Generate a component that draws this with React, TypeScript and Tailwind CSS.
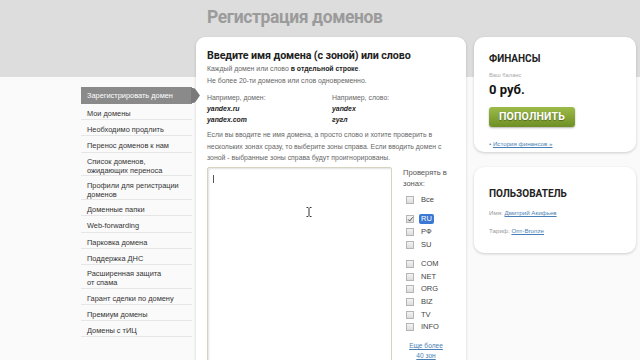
import React from "react";

const navItems: { label: React.ReactNode; active?: boolean; tall?: boolean }[] = [
  { label: "Зарегистрировать домен", active: true },
  { label: "Мои домены" },
  { label: "Необходимо продлить" },
  { label: "Перенос доменов к нам" },
  { label: <>Список доменов,<br />ожидающих переноса</>, tall: true },
  { label: <>Профили для регистрации<br />доменов</>, tall: true },
  { label: "Доменные папки" },
  { label: "Web-forwarding" },
  { label: "Парковка домена" },
  { label: "Поддержка ДНС" },
  { label: <>Расширенная защита<br />от спама</>, tall: true },
  { label: "Гарант сделки по домену" },
  { label: "Премиум домены" },
  { label: "Домены с тИЦ" },
];

function Box({ checked }: { checked?: boolean }) {
  return (
    <span className="relative inline-block w-[8px] h-[8px] border border-[#b5b5b5] bg-[linear-gradient(#f4f4f4,#dcdcdc)] shrink-0">
      {checked && (
        <svg viewBox="0 0 8 8" className="absolute left-0 top-0 w-[7px] h-[7px]">
          <path d="M1.5 4 L3 5.8 L6.5 1.5" stroke="#444" strokeWidth="1" fill="none" />
        </svg>
      )}
    </span>
  );
}

function Zone({ label, checked, selected }: { label: string; checked?: boolean; selected?: boolean }) {
  return (
    <div className="flex items-center h-[12.6px] pl-[3px]">
      <Box checked={checked} />
      <span
        className={
          "ml-[5px] text-[7.5px] leading-[10px] px-[2px] rounded-[2px] " +
          (selected ? "bg-[#3a78d4] text-white" : "text-[#444]")
        }
      >
        {label}
      </span>
    </div>
  );
}

export default function App() {
  return (
    <div
      className="w-[640px] h-[360px] overflow-hidden bg-[linear-gradient(to_bottom,#dddddd_77px,#fafafa_77px)]"
      style={{ fontFamily: '"Liberation Sans", Arial, sans-serif' }}
    >
      <div className="flex pl-[81px]">
        {/* Left navigation */}
        <nav className="w-[111px] mt-[87px] shrink-0">
          {navItems.map((it, i) => (
            <div
              key={i}
              className={
                "relative flex items-center pl-[6px] text-[7.4px] leading-[9px] " +
                (it.active
                  ? "h-[17px] bg-[#8a8a8a] text-white"
                  : (it.tall ? "h-[23.8px] pt-[4px] " : "h-[16.2px] pt-[4px] ") + "text-[#333] border-b border-[#e6e6e6]")
              }
            >
              <span>{it.label}</span>
              {it.active && (
                <span className="absolute right-[-8px] top-[1px] w-[9px] h-[15px] bg-[#7a7a7a] rounded-r-[8px] [clip-path:polygon(0_0,40%_0,100%_50%,40%_100%,0_100%)]" />
              )}
            </div>
          ))}
        </nav>

        {/* Main area */}
        <div className="ml-[4px] flex flex-col">
          <h1
            className="h-[37px] pl-[11px] pt-[6px] text-[17.5px] leading-[22px] font-bold text-[#9b9b9b] tracking-[-0.4px]"
            style={{ fontFamily: 'Roboto, "Liberation Sans", sans-serif' }}
          >
            Регистрация доменов
          </h1>
          <div className="flex gap-[8px]">
            {/* Center card */}
            <div className="w-[270px] h-[340px] bg-white rounded-[9px] shadow-[0_1px_3px_rgba(0,0,0,0.18)] pl-[11px] pr-[10px] pt-[13px]">
              <h2
                className="text-[10.7px] leading-[12px] font-bold text-[#222] tracking-[-0.1px]"
                style={{ fontFamily: 'Roboto, "Liberation Sans", sans-serif' }}
              >
                Введите имя домена (с зоной) или слово
              </h2>
              <div className="mt-[1px] text-[6.9px] leading-[11.5px] text-[#666]">
                <p>
                  Каждый домен или слово <b className="text-[#222]">в отдельной строке</b>.
                </p>
                <p>Не более 20-ти доменов или слов одновременно.</p>
              </div>
              <div className="mt-[6px] flex text-[6.9px] leading-[11px] text-[#666]">
                <div className="w-[125px]">
                  <p>Например, домен:</p>
                  <p className="font-bold italic text-[#222]">yandex.ru</p>
                  <p className="font-bold italic text-[#222]">yandex.com</p>
                </div>
                <div>
                  <p>Например, слово:</p>
                  <p className="font-bold italic text-[#222]">yandex</p>
                  <p className="font-bold italic text-[#222]">гугл</p>
                </div>
              </div>
              <p className="mt-[4px] text-[6.9px] leading-[11.5px] text-[#666] w-[240px]">
                Если вы вводите не имя домена, а просто слово и хотите проверить в нескольких зонах сразу, то выберите зоны справа. Если вводить домен с зоной - выбранные зоны справа будут проигнорированы.
              </p>
              <div className="mt-[3px] flex">
                <div className="relative w-[185px] h-[200px] border border-[#d6d4c0] rounded-[2px] shadow-[inset_1px_1px_2px_rgba(0,0,0,0.12)] bg-white">
                  <span className="absolute left-[5px] top-[7px] w-px h-[8px] bg-[#555]" />
                  <svg className="absolute left-[98px] top-[39px]" width="6" height="10" viewBox="0 0 6 10">
                    <path d="M0.5 0.5 H2.3 M3.7 0.5 H5.5 M3 1 V9 M0.5 9.5 H2.3 M3.7 9.5 H5.5" stroke="#333" strokeWidth="1" fill="none" />
                  </svg>
                </div>
                <div className="ml-[11px] flex flex-col text-[#555]">
                  <p className="text-[7.6px] leading-[11px] mt-[0px]">
                    Проверять в<br />зонах:
                  </p>
                  <div className="mt-[5px]">
                    <Zone label="Все" />
                  </div>
                  <div className="mt-[7px]">
                    <Zone label="RU" checked selected />
                    <Zone label="РФ" />
                    <Zone label="SU" />
                  </div>
                  <div className="mt-[7px]">
                    <Zone label="COM" />
                    <Zone label="NET" />
                    <Zone label="ORG" />
                    <Zone label="BIZ" />
                    <Zone label="TV" />
                    <Zone label="INFO" />
                  </div>
                  <p className="mt-[8px] text-center text-[6.6px] leading-[10px] text-[#4a7fb5] underline w-[46px]">
                    Еще более<br />40 зон
                  </p>
                </div>
              </div>
            </div>

            {/* Right column */}
            <div className="w-[162px] flex flex-col gap-[15px]">
              <div className="h-[115px] bg-white rounded-[10px] shadow-[0_1px_3px_rgba(0,0,0,0.18)] pl-[15px] pt-[16px]">
                <h3
                  className="text-[10px] leading-[12px] font-bold text-[#222]"
                  style={{ fontFamily: 'Roboto, "Liberation Sans", sans-serif' }}
                >
                  ФИНАНСЫ
                </h3>
                <p className="mt-[7px] text-[5.8px] leading-[7px] text-[#aaa]">Ваш баланс</p>
                <p
                  className="mt-[3px] text-[13px] leading-[15px] font-bold text-[#111]"
                  style={{ fontFamily: 'Roboto, "Liberation Sans", sans-serif' }}
                >
                  0 руб.
                </p>
                <div
                  className="mt-[10px] w-[86px] h-[20px] rounded-[3px] bg-[linear-gradient(#9dbb4a,#6e8f24)] shadow-[0_1px_2px_rgba(0,0,0,0.3)] flex items-center justify-center text-white text-[10.5px] font-bold tracking-[0.2px] [text-shadow:0_1px_1px_rgba(0,0,0,0.35)]"
                  style={{ fontFamily: 'Roboto, "Liberation Sans", sans-serif' }}
                >
                  ПОПОЛНИТЬ
                </div>
                <p className="mt-[13px] text-[6.2px] leading-[8px] text-[#4a7fb5]">
                  • <span className="underline">История финансов »</span>
                </p>
              </div>
              <div className="h-[86px] bg-white rounded-[10px] shadow-[0_1px_3px_rgba(0,0,0,0.18)] pl-[15px] pt-[21px]">
                <h3
                  className="text-[10px] leading-[12px] font-bold text-[#222]"
                  style={{ fontFamily: 'Roboto, "Liberation Sans", sans-serif' }}
                >
                  ПОЛЬЗОВАТЕЛЬ
                </h3>
                <p className="mt-[9px] text-[6.2px] leading-[8px] text-[#999]">
                  Имя: <span className="text-[#4a7fb5] underline">Дмитрий Акифьев</span>
                </p>
                <p className="mt-[10px] text-[6.2px] leading-[8px] text-[#999]">
                  Тариф: <span className="text-[#4a7fb5] underline">Опт-Bronze</span>
                </p>
              </div>
            </div>
          </div>
        </div>
      </div>
    </div>
  );
}
